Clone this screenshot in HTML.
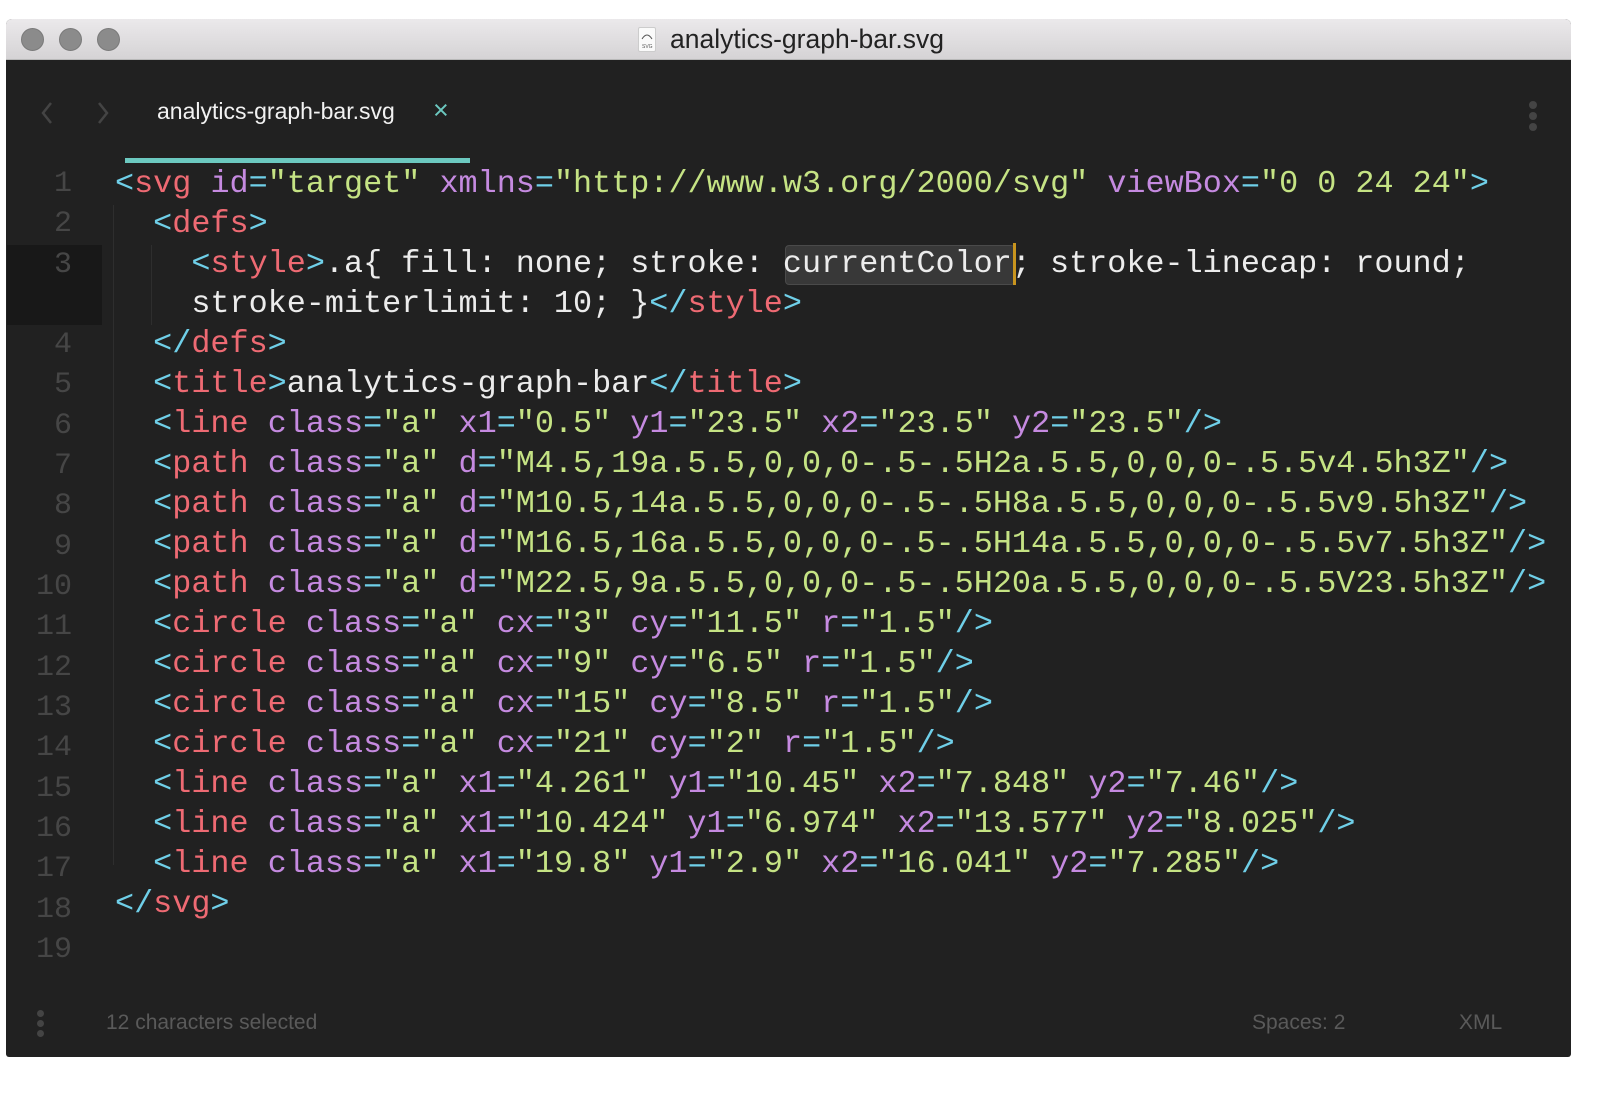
<!DOCTYPE html>
<html><head><meta charset="utf-8"><style>
*{margin:0;padding:0;box-sizing:border-box}
body{width:1600px;height:1099px;background:#fff;position:relative;overflow:hidden;font-family:"Liberation Sans",sans-serif}
.win{position:absolute;left:6px;top:19px;width:1565px;height:1038px;background:#212121;border-radius:6px 6px 3px 3px;overflow:hidden}
.tb{position:absolute;left:0;top:0;width:100%;height:41px;background:linear-gradient(#ebe9eb,#d5d3d5);border-bottom:1px solid #b8b8b8}
.dot{position:absolute;top:9px;width:23px;height:23px;border-radius:50%;background:#8b8b8b;border:1px solid #7a7a7a}
.title{position:absolute;left:664px;top:5px;font-size:26.5px;color:#222}
.ficon{position:absolute;left:632px;top:8px;width:18px;height:25px;background:#fafafa;border:1px solid #ccc;border-radius:2px}
.code{position:absolute;font-family:"Liberation Mono",monospace;font-size:31.8px;white-space:pre;color:#ececec;line-height:40px}
.ln{position:absolute;font-family:"Liberation Mono",monospace;font-size:30px;color:#464646;width:72px;text-align:right;left:0;line-height:40px}
.t{color:#ee6a73}.b{color:#6fcfe8}.a{color:#c58ae0}.s{color:#c5e384}
.status{position:absolute;top:1011px;font-size:21px;color:#5a5a5a}
</style></head><body>
<div class="win">
 <div class="tb">
  <div class="dot" style="left:15px"></div><div class="dot" style="left:53px"></div><div class="dot" style="left:91px"></div>
  <div class="ficon"><svg width="16" height="23" viewBox="0 0 16 23"><path d="M3 11 Q8 3 13 11" stroke="#555" fill="none" stroke-width="1"/><text x="3" y="20" font-size="5" fill="#555" font-family="Liberation Sans">SVG</text></svg></div>
  <div class="title">analytics-graph-bar.svg</div>
 </div>
 <svg style="position:absolute;left:30px;top:80px" width="90" height="30"><path d="M15 4 L7 14 L15 24" stroke="#444" stroke-width="2.5" fill="none"/><path d="M63 4 L71 14 L63 24" stroke="#444" stroke-width="2.5" fill="none"/></svg>
 <div style="position:absolute;left:151px;top:79px;font-size:23px;color:#f2f2f2">analytics-graph-bar.svg</div>
 <div style="position:absolute;left:427px;top:76px;font-size:27px;color:#6cc9c0">×</div>
 <div style="position:absolute;left:119px;top:139px;width:345px;height:5px;background:#6cc9c0"></div>
 <div style="position:absolute;left:1523px;top:82px;width:8px;height:8px;border-radius:50%;background:#444;box-shadow:0 11px 0 #444,0 22px 0 #444"></div>
 <div style="position:absolute;left:1px;top:226px;width:95px;height:80px;background:#181818"></div>
 <div style="position:absolute;left:107px;top:186px;width:1px;height:660px;background:#2e2e2e"></div>
 <div style="position:absolute;left:145px;top:226px;width:1px;height:80px;background:#2e2e2e"></div>
 <div style="position:absolute;left:779px;top:226px;width:230px;height:40px;background:#383838;border:1px solid #4a4a4a;border-radius:4px"></div>
 <div style="position:absolute;left:1007px;top:224px;width:3px;height:42px;background:#c8941e"></div>
</div>
<div class="ln" style="top:164px">1</div>
<div class="ln" style="top:204px">2</div>
<div class="ln" style="top:245px">3</div>
<div class="ln" style="top:325px">4</div>
<div class="ln" style="top:365px">5</div>
<div class="ln" style="top:406px">6</div>
<div class="ln" style="top:446px">7</div>
<div class="ln" style="top:486px">8</div>
<div class="ln" style="top:527px">9</div>
<div class="ln" style="top:567px">10</div>
<div class="ln" style="top:607px">11</div>
<div class="ln" style="top:648px">12</div>
<div class="ln" style="top:688px">13</div>
<div class="ln" style="top:728px">14</div>
<div class="ln" style="top:769px">15</div>
<div class="ln" style="top:809px">16</div>
<div class="ln" style="top:849px">17</div>
<div class="ln" style="top:890px">18</div>
<div class="ln" style="top:930px">19</div>
<div class="code" style="left:115px;top:164px"><span class="b">&lt;</span><span class="t">svg</span> <span class="a">id</span><span class="b">=</span><span class="s">"target"</span> <span class="a">xmlns</span><span class="b">=</span><span class="s">"http://www.w3.org/2000/svg"</span> <span class="a">viewBox</span><span class="b">=</span><span class="s">"0 0 24 24"</span><span class="b">&gt;</span>
  <span class="b">&lt;</span><span class="t">defs</span><span class="b">&gt;</span>
    <span class="b">&lt;</span><span class="t">style</span><span class="b">&gt;</span>.a{ fill: none; stroke: currentColor; stroke-linecap: round;
    stroke-miterlimit: 10; }<span class="b">&lt;/</span><span class="t">style</span><span class="b">&gt;</span>
  <span class="b">&lt;/</span><span class="t">defs</span><span class="b">&gt;</span>
  <span class="b">&lt;</span><span class="t">title</span><span class="b">&gt;</span>analytics-graph-bar<span class="b">&lt;/</span><span class="t">title</span><span class="b">&gt;</span>
  <span class="b">&lt;</span><span class="t">line</span> <span class="a">class</span><span class="b">=</span><span class="s">"a"</span> <span class="a">x1</span><span class="b">=</span><span class="s">"0.5"</span> <span class="a">y1</span><span class="b">=</span><span class="s">"23.5"</span> <span class="a">x2</span><span class="b">=</span><span class="s">"23.5"</span> <span class="a">y2</span><span class="b">=</span><span class="s">"23.5"</span><span class="b">/&gt;</span>
  <span class="b">&lt;</span><span class="t">path</span> <span class="a">class</span><span class="b">=</span><span class="s">"a"</span> <span class="a">d</span><span class="b">=</span><span class="s">"M4.5,19a.5.5,0,0,0-.5-.5H2a.5.5,0,0,0-.5.5v4.5h3Z"</span><span class="b">/&gt;</span>
  <span class="b">&lt;</span><span class="t">path</span> <span class="a">class</span><span class="b">=</span><span class="s">"a"</span> <span class="a">d</span><span class="b">=</span><span class="s">"M10.5,14a.5.5,0,0,0-.5-.5H8a.5.5,0,0,0-.5.5v9.5h3Z"</span><span class="b">/&gt;</span>
  <span class="b">&lt;</span><span class="t">path</span> <span class="a">class</span><span class="b">=</span><span class="s">"a"</span> <span class="a">d</span><span class="b">=</span><span class="s">"M16.5,16a.5.5,0,0,0-.5-.5H14a.5.5,0,0,0-.5.5v7.5h3Z"</span><span class="b">/&gt;</span>
  <span class="b">&lt;</span><span class="t">path</span> <span class="a">class</span><span class="b">=</span><span class="s">"a"</span> <span class="a">d</span><span class="b">=</span><span class="s">"M22.5,9a.5.5,0,0,0-.5-.5H20a.5.5,0,0,0-.5.5V23.5h3Z"</span><span class="b">/&gt;</span>
  <span class="b">&lt;</span><span class="t">circle</span> <span class="a">class</span><span class="b">=</span><span class="s">"a"</span> <span class="a">cx</span><span class="b">=</span><span class="s">"3"</span> <span class="a">cy</span><span class="b">=</span><span class="s">"11.5"</span> <span class="a">r</span><span class="b">=</span><span class="s">"1.5"</span><span class="b">/&gt;</span>
  <span class="b">&lt;</span><span class="t">circle</span> <span class="a">class</span><span class="b">=</span><span class="s">"a"</span> <span class="a">cx</span><span class="b">=</span><span class="s">"9"</span> <span class="a">cy</span><span class="b">=</span><span class="s">"6.5"</span> <span class="a">r</span><span class="b">=</span><span class="s">"1.5"</span><span class="b">/&gt;</span>
  <span class="b">&lt;</span><span class="t">circle</span> <span class="a">class</span><span class="b">=</span><span class="s">"a"</span> <span class="a">cx</span><span class="b">=</span><span class="s">"15"</span> <span class="a">cy</span><span class="b">=</span><span class="s">"8.5"</span> <span class="a">r</span><span class="b">=</span><span class="s">"1.5"</span><span class="b">/&gt;</span>
  <span class="b">&lt;</span><span class="t">circle</span> <span class="a">class</span><span class="b">=</span><span class="s">"a"</span> <span class="a">cx</span><span class="b">=</span><span class="s">"21"</span> <span class="a">cy</span><span class="b">=</span><span class="s">"2"</span> <span class="a">r</span><span class="b">=</span><span class="s">"1.5"</span><span class="b">/&gt;</span>
  <span class="b">&lt;</span><span class="t">line</span> <span class="a">class</span><span class="b">=</span><span class="s">"a"</span> <span class="a">x1</span><span class="b">=</span><span class="s">"4.261"</span> <span class="a">y1</span><span class="b">=</span><span class="s">"10.45"</span> <span class="a">x2</span><span class="b">=</span><span class="s">"7.848"</span> <span class="a">y2</span><span class="b">=</span><span class="s">"7.46"</span><span class="b">/&gt;</span>
  <span class="b">&lt;</span><span class="t">line</span> <span class="a">class</span><span class="b">=</span><span class="s">"a"</span> <span class="a">x1</span><span class="b">=</span><span class="s">"10.424"</span> <span class="a">y1</span><span class="b">=</span><span class="s">"6.974"</span> <span class="a">x2</span><span class="b">=</span><span class="s">"13.577"</span> <span class="a">y2</span><span class="b">=</span><span class="s">"8.025"</span><span class="b">/&gt;</span>
  <span class="b">&lt;</span><span class="t">line</span> <span class="a">class</span><span class="b">=</span><span class="s">"a"</span> <span class="a">x1</span><span class="b">=</span><span class="s">"19.8"</span> <span class="a">y1</span><span class="b">=</span><span class="s">"2.9"</span> <span class="a">x2</span><span class="b">=</span><span class="s">"16.041"</span> <span class="a">y2</span><span class="b">=</span><span class="s">"7.285"</span><span class="b">/&gt;</span>
<span class="b">&lt;/</span><span class="t">svg</span><span class="b">&gt;</span></div>
<div style="position:absolute;left:37px;top:1010px;width:7px;height:7px;border-radius:50%;background:#444;box-shadow:0 10px 0 #444,0 20px 0 #444"></div>
<div class="status" style="left:106px">12 characters selected</div>
<div class="status" style="left:1252px">Spaces: 2</div>
<div class="status" style="left:1459px">XML</div>
</body></html>
